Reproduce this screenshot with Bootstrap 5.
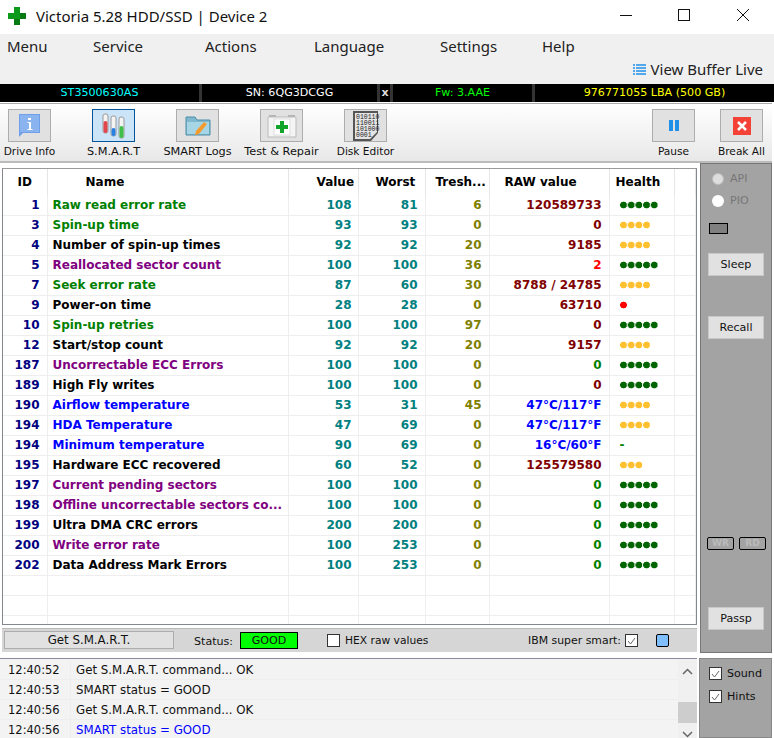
<!DOCTYPE html>
<html lang="en">
<head>
<meta charset="utf-8">
<title>Victoria 5.28 HDD/SSD | Device 2</title>
<link rel="stylesheet" href="https://cdn.jsdelivr.net/npm/bootstrap@5.3.0/dist/css/bootstrap.min.css">
<style>
html,body{height:738px;overflow:hidden;background:#fff}
body{width:774px;font-family:"DejaVu Sans","Liberation Sans",sans-serif;font-size:11.1px;color:#000;line-height:1}
.ttl{height:34px;padding:0 0 2px 8px;font-family:"Noto Sans",sans-serif;font-size:15px;color:#111}
.ttl svg.lg{margin-right:10px}
.winb{margin-left:auto;margin-right:2px;align-self:flex-start}
.winb span{width:58.5px;height:30px;display:flex;align-items:center;justify-content:center}
.mnu{height:50px;background:#f0f0f0;font-family:"Noto Sans",sans-serif;font-size:15px;color:#222;position:relative}
.mitem{position:absolute;top:5px}
.mnu2{position:absolute;right:11px;top:28px;gap:5px}
.inf{height:18px;background:#000;margin-bottom:1px}
.inf div{height:100%;display:flex;align-items:center;justify-content:center;border-right:3px solid #333}
.tools{height:60px;border-top:1px solid #aaa;border-bottom:2px solid #bbb;background:linear-gradient(#fff,#e8e8e8);position:relative;margin-right:2px}
.tb{position:absolute;top:5px;width:75px;text-align:center;color:#111;white-space:nowrap;font-size:11.3px}
.tb.nrw{font-size:10.6px}
.tbi{display:flex;width:43px;height:33px;margin:0 auto 4px;background:#e1e1e1;border:1px solid #adadad;align-items:center;justify-content:center}
.tbi.on{background:#cce4f7;border-color:#005499}
.wrap{height:490px}
.lft{width:700px;padding:5px 3px 0 2px}
.grid{width:695px;height:457px;border:1px solid #828790;border-top-color:#999;background:#fff;overflow:hidden}
.tbl{table-layout:fixed;border-collapse:collapse;width:693px;font-size:12px;font-weight:700}
.tbl th{height:26px;color:#000;text-align:left;vertical-align:middle;border-right:1px solid #e6e6e6;padding:0}
.tbl th.ch0{text-align:center}
.tbl th.ch1{padding-left:38px}.tbl th.ch2{padding-left:28px}.tbl th.ch3{padding-left:17px}.tbl th.ch4{padding-left:10px}.tbl th.ch5{padding-left:15px}.tbl th.ch6{padding-left:6px}
.tbl td{height:20px;border-right:1px solid #eee;border-bottom:1px solid #eee;padding:0 7px;text-align:right;white-space:nowrap;overflow:hidden}
.tbl td.nm{text-align:left;padding-left:5px}
.tbl td.cv1{padding-right:6px}
.cid{color:#000080}.cv,.cv1{color:#008080}.ct{color:#808000}.cr{color:#800000}
.cg{color:#008000!important}.cp{color:#800080!important}.cb{color:#00f!important}.cx{color:#000!important}.cf{color:#f00!important}
.tbl td.hl{text-align:left;padding-left:10px}
.dots{display:block;height:8px;background-size:7.7px 8px;background-repeat:repeat-x}
.dg{background-image:radial-gradient(circle at 3.500px 4px,#006400 3.100px,transparent 3.700px)}
.dy{background-image:radial-gradient(circle at 3.500px 4px,#ffc030 3.100px,transparent 3.700px)}
.dr{background-image:radial-gradient(circle at 3.500px 4px,#f00 3.100px,transparent 3.700px)}
.n5{width:38.5px}.n4{width:30.8px}.n3{width:23.1px}.n1{width:7.7px}
.strip{height:24px;margin-top:3px;background:#d6d6d6;border-top:1px solid #bbb;width:695px;position:relative;color:#111}
.strip>*{position:absolute}
.gs{left:2px;top:2px;width:170px;height:18px;padding-top:2px;background:#e1e1e1;border:1px solid #adadad;display:flex;align-items:center;justify-content:center;font-size:11.8px}
.stl{left:192px;top:7px}
.good{left:238px;top:3px;width:58px;height:17px;background:#0f0;border:1px solid #000;display:flex;align-items:center;justify-content:center}
.chk{width:13px;height:13px;background:#fff;border:1px solid #333;display:inline-flex;align-items:center;justify-content:center;flex:none}
.hx{left:325px;top:5px}.hxl{left:343px;top:7px;font-size:10.7px}.ibml{left:526px;top:7px;font-size:10.9px}.ibc{left:623px;top:5px}
.sq{left:654px;top:5px;width:13px;height:13px;background:#80bfff;border:1px solid #000;border-radius:2px}
.rgt{width:72px;height:490px;background:#a3a3a3;border:1px solid #777;color:#777;position:relative}
.rgt>*{position:absolute}
.rd{left:11px;display:flex;align-items:center;gap:6px;color:#777}
.rd i{display:block;flex:none;width:12px;height:12px;border-radius:50%;background:#fff}
.rd i.off{background:#ddd;border:1px solid #bbb}
.led{left:8px;top:59px;width:19px;height:11px;background:#808080;border:1px solid #000}
.sb{left:7px;width:56px;height:23px;background:#e1e1e1;border:1px solid #c8c8c8;color:#111;display:flex;align-items:center;justify-content:center}
.wrb{top:373px;width:27px;height:13px;border:1px solid #000;border-radius:2px;font-size:9px;font-weight:700;color:#bbb;display:flex;align-items:center;justify-content:center}
.btm{margin-top:5px;height:80px}
.logb{width:697px;height:80px;border-top:1px solid #8a8a9a;background:#f3f3f3;position:relative;margin-right:2px;padding-top:1px}
.lr{height:20px;display:flex;align-items:center;border-bottom:1px solid #eee;color:#111;font-size:11.8px}
.lt{width:71px;padding:3px 0 0 8px;border-right:1px solid #eee;height:100%;display:flex;align-items:center;flex:none;font-size:11.5px}
.lm{padding:3px 0 0 5px}
.lb{color:#00f}
.scr{position:absolute;right:0;top:0;width:19px;height:80px;background:#f0f0f0}
.scr>*{position:absolute;left:0}
.thumb{top:43px;width:19px;height:21px;background:#cdcdcd}
.opt{width:73px;height:80px;background:#a3a3a3;border:1px solid #888;padding:3px 0 0 9px;color:#111}
.opt div{display:flex;align-items:center;gap:5px;height:23px}
</style>
</head>
<body>
<div class="ttl d-flex align-items-center">
  <svg class="lg" width="18" height="18" viewBox="0 0 18 18"><path d="M6 0h6v6h6v6h-6v6H6v-6H0V6h6z" fill="#0b9a1b"/><path d="M6 12h6v6H6zM12 6h6v6h-6z" fill="#077a13"/></svg>
  <span>Victoria 5.28 HDD/SSD | Device 2</span>
  <div class="winb d-flex">
    <span><svg width="12" height="12"><path d="M0 6.5h12" stroke="#111"/></svg></span>
    <span><svg width="12" height="12"><rect x=".5" y=".5" width="11" height="11" fill="none" stroke="#111"/></svg></span>
    <span><svg width="12" height="12"><path d="M0 0l12 12M12 0L0 12" stroke="#111"/></svg></span>
  </div>
</div>
<div class="mnu">
  <span class="mitem" style="left:7px">Menu</span>
  <span class="mitem" style="left:93px">Service</span>
  <span class="mitem" style="left:205px">Actions</span>
  <span class="mitem" style="left:314px">Language</span>
  <span class="mitem" style="left:440px">Settings</span>
  <span class="mitem" style="left:542px">Help</span>
  <div class="mnu2 d-flex align-items-center">
    <svg width="13" height="12" viewBox="0 0 13 12"><path d="M0 1h2M3 1h10M0 4h2M3 4h10M0 7h2M3 7h10M0 10h2M3 10h10" stroke="#1e90e8" stroke-width="1.4"/></svg>
    <span>View Buffer Live</span>
  </div>
</div>
<div class="inf d-flex">
  <div style="width:202px;color:#0ff">ST3500630AS</div>
  <div style="width:178px;color:#fff">SN: 6QG3DCGG</div>
  <div style="width:13px;color:#ddd;font-weight:700">x</div>
  <div style="width:142px;color:#0f0">Fw: 3.AAE</div>
  <div style="width:239px;color:#ff0;border:0">976771055 LBA (500 GB)</div>
</div>
<div class="tools">
  <div class="tb nrw" style="left:-8px"><span class="tbi"><svg width="22" height="24" viewBox="0 0 22 24"><path d="M0 0h21v19H4l-4 4z" fill="#6f9fe8"/><path d="M1 1h19v17H1z" fill="#8ab4f0"/><path d="M9 4h3v2H9zM8.500 8H12v7h1.500v1h-5v-1H10V9H8.500z" fill="#fff"/></svg></span>Drive Info</div>
  <div class="tb" style="left:76px"><span class="tbi on"><svg width="24" height="26" viewBox="0 0 24 26"><rect x="1" y="1" width="5" height="19" rx="2" fill="#f4f4f4" stroke="#999"/><rect x="1.500" y="8" width="4" height="12" rx="2" fill="#e0474c"/><rect x="9" y="3" width="5" height="20" rx="2" fill="#f4f4f4" stroke="#999"/><rect x="9.500" y="15" width="4" height="8" rx="2" fill="#2a80e0"/><rect x="17" y="4" width="5" height="21" rx="2" fill="#f4f4f4" stroke="#999"/><rect x="17.500" y="13" width="4" height="12" rx="2" fill="#3fc04a"/></svg></span>S.M.A.R.T</div>
  <div class="tb" style="left:160px"><span class="tbi"><svg width="26" height="26" viewBox="0 0 26 26"><path d="M1 4h9l2 3h13v15H1z" fill="#7fb8cf" stroke="#4f8ea8"/><path d="M2 9h22v12H2z" fill="#a6d5e6"/><path d="M19 9l3 2-8 10-4 1 1-4z" fill="#f59b2e"/></svg></span>SMART Logs</div>
  <div class="tb" style="left:244px"><span class="tbi"><svg width="32" height="26" viewBox="0 0 32 26"><path d="M3 3h7M22 3h7" stroke="#888"/><path d="M2 4h28v20H2z" fill="#f4f4f4" stroke="#bbb"/><rect x="8" y="6" width="16" height="16" fill="#fff" stroke="#ddd"/><path d="M14 8h4v4h4v4h-4v4h-4v-4h-4v-4h4z" fill="#12a52a"/></svg></span>Test &amp; Repair</div>
  <div class="tb nrw" style="left:328px"><span class="tbi"><svg width="30" height="32" viewBox="0 0 30 32"><path d="M2 1h25v22l-7 8H2z" fill="#555"/><path d="M4 3h22v19l-7 7H4z" fill="#e4e4e4"/><text x="5" y="9" font-family="Liberation Mono" font-size="6.500" fill="#222">010110</text><text x="5" y="15" font-family="Liberation Mono" font-size="6.500" fill="#222">110011</text><text x="5" y="21" font-family="Liberation Mono" font-size="6.500" fill="#222">101000</text><text x="5" y="27" font-family="Liberation Mono" font-size="6.500" fill="#222">0001</text></svg></span>Disk Editor</div>
  <div class="tb nrw" style="left:636px"><span class="tbi"><svg width="10" height="11"><path d="M0 0h4v11H0zM6 0h4v11H6z" fill="#1e90e8"/></svg></span>Pause</div>
  <div class="tb nrw" style="left:704px"><span class="tbi"><svg width="18" height="18"><rect width="18" height="18" fill="#f44336"/><path d="M5 5l8 8M13 5l-8 8" stroke="#fff" stroke-width="2.500"/></svg></span>Break All</div>
</div>
<div class="wrap d-flex">
  <div class="lft">
    <div class="grid">
      <table class="tbl">
        <colgroup><col style="width:44px"><col style="width:241px"><col style="width:70px"><col style="width:67px"><col style="width:64px"><col style="width:120px"><col style="width:65px"><col></colgroup>
        <thead><tr><th class="ch0">ID</th><th class="ch1">Name</th><th class="ch2">Value</th><th class="ch3">Worst</th><th class="ch4">Tresh...</th><th class="ch5">RAW value</th><th class="ch6">Health</th><th></th></tr></thead>
        <tbody>
        <tr><td class="cid">1</td><td class="nm cg">Raw read error rate</td><td class="cv1">108</td><td class="cv">81</td><td class="ct">6</td><td class="cr">120589733</td><td class="hl"><i class="dots dg n5"></i></td><td></td></tr>
        <tr><td class="cid">3</td><td class="nm cg">Spin-up time</td><td class="cv1">93</td><td class="cv">93</td><td class="ct">0</td><td class="cr">0</td><td class="hl"><i class="dots dy n4"></i></td><td></td></tr>
        <tr><td class="cid">4</td><td class="nm cx">Number of spin-up times</td><td class="cv1">92</td><td class="cv">92</td><td class="ct">20</td><td class="cr">9185</td><td class="hl"><i class="dots dy n4"></i></td><td></td></tr>
        <tr><td class="cid">5</td><td class="nm cp">Reallocated sector count</td><td class="cv1">100</td><td class="cv">100</td><td class="ct">36</td><td class="cf">2</td><td class="hl"><i class="dots dg n5"></i></td><td></td></tr>
        <tr><td class="cid">7</td><td class="nm cg">Seek error rate</td><td class="cv1">87</td><td class="cv">60</td><td class="ct">30</td><td class="cr">8788 / 24785</td><td class="hl"><i class="dots dy n4"></i></td><td></td></tr>
        <tr><td class="cid">9</td><td class="nm cx">Power-on time</td><td class="cv1">28</td><td class="cv">28</td><td class="ct">0</td><td class="cr">63710</td><td class="hl"><i class="dots dr n1"></i></td><td></td></tr>
        <tr><td class="cid">10</td><td class="nm cg">Spin-up retries</td><td class="cv1">100</td><td class="cv">100</td><td class="ct">97</td><td class="cr">0</td><td class="hl"><i class="dots dg n5"></i></td><td></td></tr>
        <tr><td class="cid">12</td><td class="nm cx">Start/stop count</td><td class="cv1">92</td><td class="cv">92</td><td class="ct">20</td><td class="cr">9157</td><td class="hl"><i class="dots dy n4"></i></td><td></td></tr>
        <tr><td class="cid">187</td><td class="nm cp">Uncorrectable ECC Errors</td><td class="cv1">100</td><td class="cv">100</td><td class="ct">0</td><td class="cg">0</td><td class="hl"><i class="dots dg n5"></i></td><td></td></tr>
        <tr><td class="cid">189</td><td class="nm cx">High Fly writes</td><td class="cv1">100</td><td class="cv">100</td><td class="ct">0</td><td class="cr">0</td><td class="hl"><i class="dots dg n5"></i></td><td></td></tr>
        <tr><td class="cid">190</td><td class="nm cb">Airflow temperature</td><td class="cv1">53</td><td class="cv">31</td><td class="ct">45</td><td class="cb">47°C/117°F</td><td class="hl"><i class="dots dy n4"></i></td><td></td></tr>
        <tr><td class="cid">194</td><td class="nm cb">HDA Temperature</td><td class="cv1">47</td><td class="cv">69</td><td class="ct">0</td><td class="cb">47°C/117°F</td><td class="hl"><i class="dots dy n4"></i></td><td></td></tr>
        <tr><td class="cid">194</td><td class="nm cb">Minimum temperature</td><td class="cv1">90</td><td class="cv">69</td><td class="ct">0</td><td class="cb">16°C/60°F</td><td class="hl cg">-</td><td></td></tr>
        <tr><td class="cid">195</td><td class="nm cx">Hardware ECC recovered</td><td class="cv1">60</td><td class="cv">52</td><td class="ct">0</td><td class="cr">125579580</td><td class="hl"><i class="dots dy n3"></i></td><td></td></tr>
        <tr><td class="cid">197</td><td class="nm cp">Current pending sectors</td><td class="cv1">100</td><td class="cv">100</td><td class="ct">0</td><td class="cg">0</td><td class="hl"><i class="dots dg n5"></i></td><td></td></tr>
        <tr><td class="cid">198</td><td class="nm cp">Offline uncorrectable sectors co...</td><td class="cv1">100</td><td class="cv">100</td><td class="ct">0</td><td class="cg">0</td><td class="hl"><i class="dots dg n5"></i></td><td></td></tr>
        <tr><td class="cid">199</td><td class="nm cx">Ultra DMA CRC errors</td><td class="cv1">200</td><td class="cv">200</td><td class="ct">0</td><td class="cg">0</td><td class="hl"><i class="dots dg n5"></i></td><td></td></tr>
        <tr><td class="cid">200</td><td class="nm cp">Write error rate</td><td class="cv1">100</td><td class="cv">253</td><td class="ct">0</td><td class="cg">0</td><td class="hl"><i class="dots dg n5"></i></td><td></td></tr>
        <tr><td class="cid">202</td><td class="nm cx">Data Address Mark Errors</td><td class="cv1">100</td><td class="cv">253</td><td class="ct">0</td><td class="cg">0</td><td class="hl"><i class="dots dg n5"></i></td><td></td></tr>
        <tr><td></td><td></td><td></td><td></td><td></td><td></td><td></td><td></td></tr>
        <tr><td></td><td></td><td></td><td></td><td></td><td></td><td></td><td></td></tr>
        <tr><td></td><td></td><td></td><td></td><td></td><td></td><td></td><td></td></tr>
        </tbody>
      </table>
    </div>
    <div class="strip">
      <div class="gs">Get S.M.A.R.T.</div>
      <span class="stl">Status:</span>
      <div class="good">GOOD</div>
      <span class="chk hx"></span><span class="hxl">HEX raw values</span>
      <span class="ibml">IBM super smart:</span>
      <span class="chk ibc"><svg width="9" height="8"><path d="M1 4l2.500 3L8 1" fill="none" stroke="#666"/></svg></span>
      <span class="sq"></span>
    </div>
  </div>
  <div class="rgt">
    <div class="rd" style="top:9px"><i class="off"></i><span>API</span></div>
    <div class="rd" style="top:31px"><i></i><span>PIO</span></div>
    <div class="led"></div>
    <div class="sb" style="top:89px">Sleep</div>
    <div class="sb" style="top:152px">Recall</div>
    <div class="wrb" style="left:6px">WR</div>
    <div class="wrb" style="left:38px">RD</div>
    <div class="sb" style="top:443px">Passp</div>
  </div>
</div>
<div class="btm d-flex">
  <div class="logb">
    <div class="lr"><span class="lt">12:40:52</span><span class="lm">Get S.M.A.R.T. command... OK</span></div>
    <div class="lr"><span class="lt">12:40:53</span><span class="lm">SMART status = GOOD</span></div>
    <div class="lr"><span class="lt">12:40:56</span><span class="lm">Get S.M.A.R.T. command... OK</span></div>
    <div class="lr"><span class="lt">12:40:56</span><span class="lm lb">SMART status = GOOD</span></div>
    <div class="scr">
      <svg style="top:9px;left:4px" width="11" height="7"><path d="M1 6l4.500-4.500L10 6" fill="none" stroke="#666" stroke-width="1.500"/></svg>
      <div class="thumb"></div>
      <svg style="top:72px;left:4px" width="11" height="7"><path d="M1 1l4.500 4.500L10 1" fill="none" stroke="#666" stroke-width="1.500"/></svg>
    </div>
  </div>
  <div class="opt">
    <div><span class="chk"><svg width="9" height="8"><path d="M1 4l2.500 3L8 1" fill="none" stroke="#666"/></svg></span>Sound</div>
    <div><span class="chk"><svg width="9" height="8"><path d="M1 4l2.500 3L8 1" fill="none" stroke="#666"/></svg></span>Hints</div>
  </div>
</div>
<script src="https://cdn.jsdelivr.net/npm/bootstrap@5.3.0/dist/js/bootstrap.bundle.min.js"></script>
</body>
</html>
